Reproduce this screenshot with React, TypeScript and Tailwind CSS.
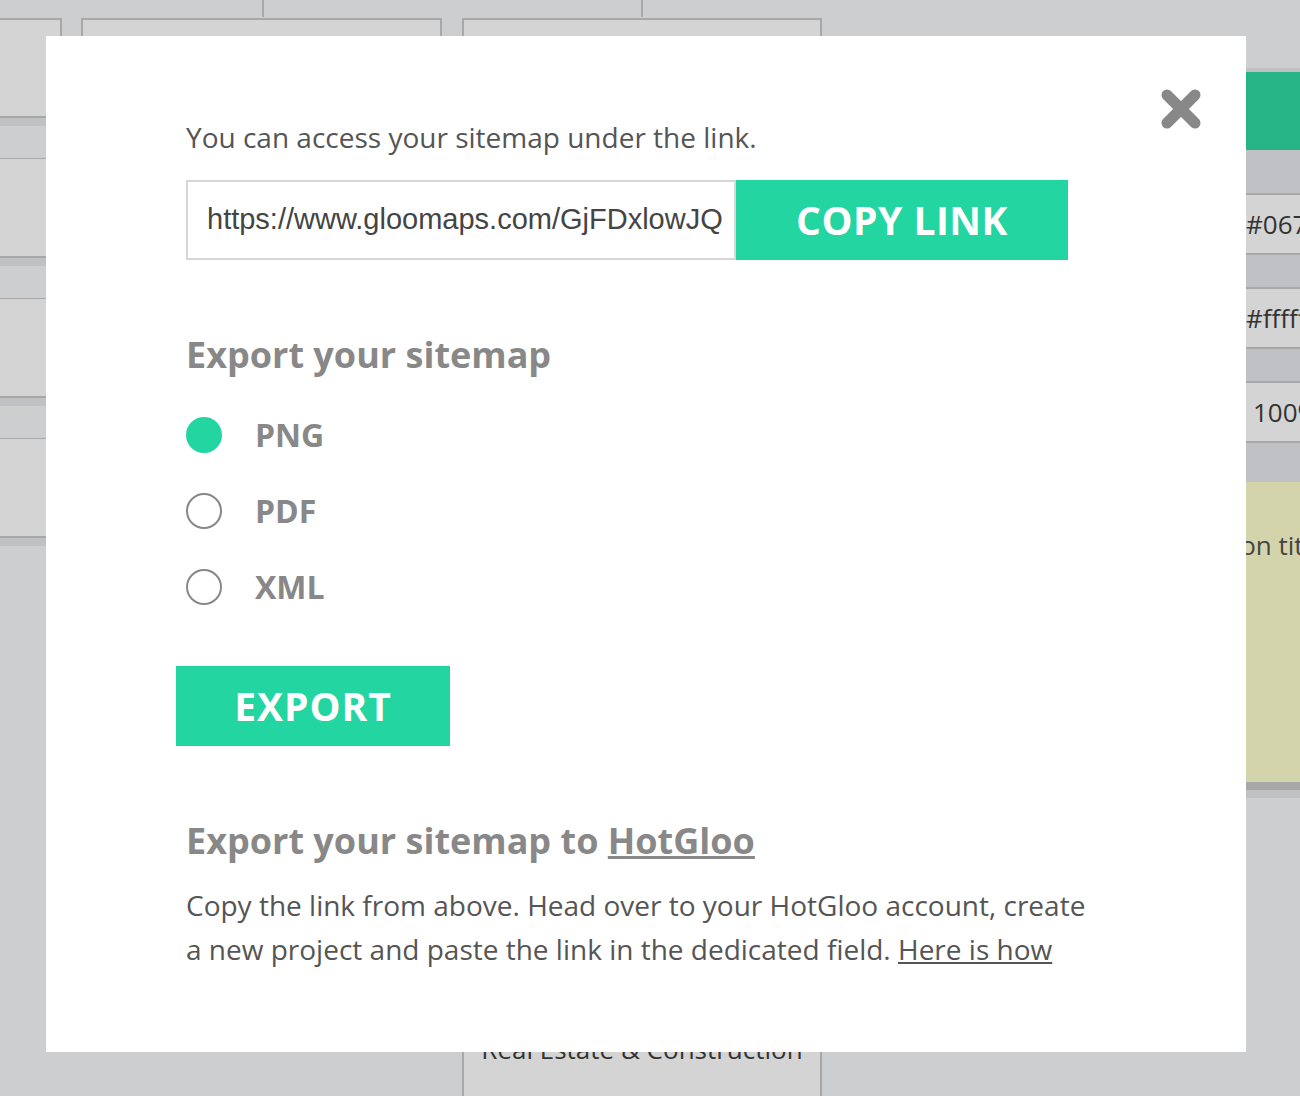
import React, { useState } from 'react';

const formats = ['PNG', 'PDF', 'XML'];

// one field row of the style panel on the right edge
const PanelField = ({ value, indent = 'pl-[66px]' }: { value: string; indent?: string }) => (
  <div className="border-y-2 border-[#a8a8a8] bg-[#d4d4d4] h-[62px] flex items-center">
    <span className={`${indent} whitespace-nowrap text-[26px] text-[#333]`}>{value}</span>
  </div>
);

const Backdrop = () => (
  <div className="absolute inset-0">
    {/* connector stubs above the top row of nodes */}
    <div className="absolute left-[262px] top-0 h-[17px] w-[2px] bg-[#aaa]" />
    <div className="absolute left-[641px] top-0 h-[17px] w-[2px] bg-[#aaa]" />

    {/* left column of nodes */}
    <div className="absolute left-0 top-[18px] w-[62px] flex flex-col gap-[32px]">
      {[0, 1, 2, 3].map(i => (
        <div key={i} className="flex flex-col">
          <div className={`h-[98px] bg-[#d4d4d4] border-r-2 border-[#a8a8a8] ${i === 0 ? 'border-t-2' : 'border-t'}`} />
          <div className="h-[2px] bg-[#a8a8a8]" />
          <div className="h-[8px] bg-[#c0c1c4]" />
        </div>
      ))}
    </div>

    {/* top row nodes */}
    <div className="absolute left-[81px] top-[18px] w-[361px] h-[900px] border-2 border-[#a8a8a8] bg-[#d4d4d4]" />
    <div className="absolute left-[462px] top-[18px] w-[360px] h-[1080px] border-2 border-b-0 border-[#a8a8a8] bg-[#d4d4d4] flex flex-col justify-end items-center pb-[36px]">
      <span className="text-[26px] text-[#333] leading-none">Real Estate &amp; Construction</span>
    </div>

    {/* style panel */}
    <div className="absolute left-[1180px] top-[68px] w-[120px] flex flex-col">
      <div className="h-[4px] bg-[#c0c1c4]" />
      <div className="h-[78px] bg-[#26b386]" />
      <div className="h-[43px] bg-[#c0c1c4]" />
      <PanelField value="#0671b8" />
      <div className="h-[32px] bg-[#c0c1c4]" />
      <PanelField value="#ffffff" />
      <div className="h-[32px] bg-[#c0c1c4]" />
      <PanelField value="100%" indent="pl-[73px]" />
      <div className="h-[39px] bg-[#c0c1c4]" />
      <div className="h-[300px] bg-[#d3d4ac] pt-[44px] whitespace-nowrap">
        <span className="pl-[3px] text-[26px] text-[#444]">Section title</span>
      </div>
      <div className="h-[8px] bg-[#a8a8a8]" />
      <div className="h-[8px] bg-[#c0c1c4]" />
    </div>
  </div>
);

const Radio = ({ checked }: { checked: boolean }) =>
  checked ? (
    <span className="block w-[36px] h-[36px] rounded-full bg-[#23d5a0]" />
  ) : (
    <span className="block w-[36px] h-[36px] rounded-full border-2 border-[#888]" />
  );

const ExportDialog = () => {
  const [format, setFormat] = useState('PNG');
  const link = 'https://www.gloomaps.com/GjFDxlowJQ';

  return (
    <div className="absolute left-[46px] top-[36px] w-[1200px] h-[1016px] bg-white pl-[140px] pt-[82px]">
      <button className="absolute right-[44px] top-[52px] w-[42px] h-[42px]" aria-label="Close">
        <svg viewBox="0 0 42 42" className="w-full h-full">
          <path d="M7 7 L35 35 M35 7 L7 35" stroke="#888" strokeWidth="11" strokeLinecap="round" />
        </svg>
      </button>

      <p className="text-[28px] leading-[38px] text-[#555]">You can access your sitemap under the link.</p>

      <div className="flex mt-[24px]">
        <div className="w-[550px] h-[80px] border-2 border-[#d6d6d6] flex items-center pl-[19px]">
          <span className="font-['Liberation_Sans',sans-serif] text-[29px] text-[#444]">{link}</span>
        </div>
        <button className="w-[332px] h-[80px] bg-[#23d5a0] text-white font-bold text-[39px] tracking-[0.5px]">
          COPY LINK
        </button>
      </div>

      <h2 className="mt-[71px] text-[36px] leading-[48px] font-bold text-[#888]">Export your sitemap</h2>

      <div className="mt-[38px] flex flex-col gap-[40px]">
        {formats.map(f => (
          <label key={f} className="flex items-center h-[36px] cursor-pointer" onClick={() => setFormat(f)}>
            <Radio checked={format === f} />
            <span className="ml-[33px] text-[32px] font-bold text-[#888]">{f}</span>
          </label>
        ))}
      </div>

      <button className="mt-[61px] -ml-[10px] w-[274px] h-[80px] bg-[#23d5a0] text-white font-bold text-[39px] tracking-[1px]">
        EXPORT
      </button>

      <h2 className="mt-[71px] text-[36px] leading-[48px] font-bold text-[#888]">
        Export your sitemap to <a className="underline">HotGloo</a>
      </h2>
      <p className="mt-[18px] w-[905px] text-[28px] leading-[44px] text-[#555]">
        Copy the link from above. Head over to your HotGloo account, create a new project and paste the link in the
        dedicated field. <a className="underline">Here is how</a>
      </p>
    </div>
  );
};

export default function App() {
  return (
    <div className="relative w-[1300px] h-[1096px] overflow-hidden bg-[#cdced0] font-['Open_Sans',sans-serif]">
      <Backdrop />
      <ExportDialog />
    </div>
  );
}
